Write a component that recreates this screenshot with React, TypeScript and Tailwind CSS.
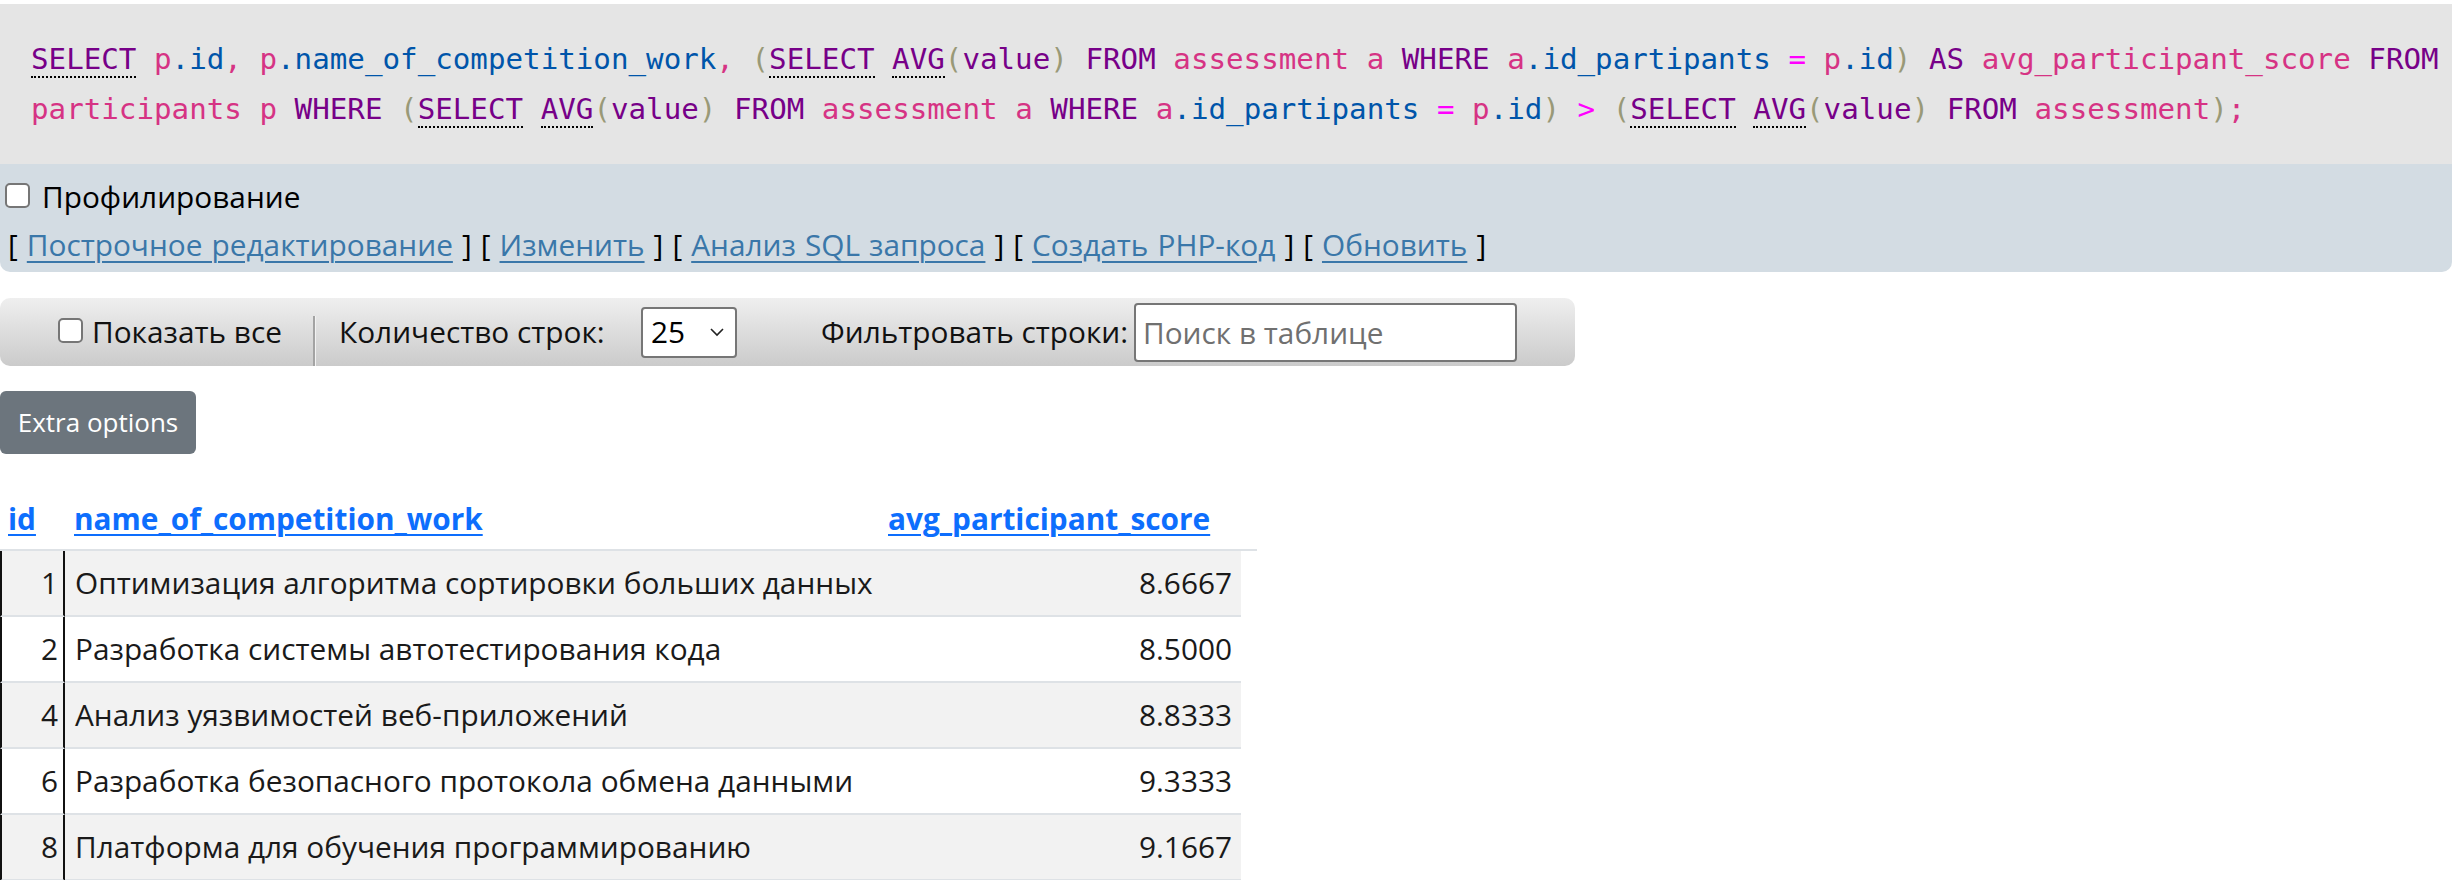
type Tok = [string, string];

const K = 'text-[#770088]';
const U = 'text-[#770088] border-b-2 border-dotted border-black';
const V = 'text-[#d63384]';
const C = 'text-[#0055aa]';
const B = 'text-[#999977]';
const O = 'text-[#ff00ff]';
const S = '';

const line1: Tok[] = [
  [U, 'SELECT'], [S, ' '], [V, 'p'], [C, '.id'], [V, ','], [S, ' '], [V, 'p'],
  [C, '.name_of_competition_work'], [V, ','], [S, ' '], [B, '('], [U, 'SELECT'], [S, ' '],
  [U, 'AVG'], [B, '('], [K, 'value'], [B, ')'], [S, ' '], [K, 'FROM'], [S, ' '],
  [V, 'assessment'], [S, ' '], [V, 'a'], [S, ' '], [K, 'WHERE'], [S, ' '], [V, 'a'],
  [C, '.id_partipants'], [S, ' '], [O, '='], [S, ' '], [V, 'p'], [C, '.id'], [B, ')'],
  [S, ' '], [K, 'AS'], [S, ' '], [V, 'avg_participant_score'], [S, ' '], [K, 'FROM'],
];

const line2: Tok[] = [
  [V, 'participants'], [S, ' '], [V, 'p'], [S, ' '], [K, 'WHERE'], [S, ' '], [B, '('],
  [U, 'SELECT'], [S, ' '], [U, 'AVG'], [B, '('], [K, 'value'], [B, ')'], [S, ' '],
  [K, 'FROM'], [S, ' '], [V, 'assessment'], [S, ' '], [V, 'a'], [S, ' '], [K, 'WHERE'],
  [S, ' '], [V, 'a'], [C, '.id_partipants'], [S, ' '], [O, '='], [S, ' '], [V, 'p'],
  [C, '.id'], [B, ')'], [S, ' '], [O, '>'], [S, ' '], [B, '('], [U, 'SELECT'], [S, ' '],
  [U, 'AVG'], [B, '('], [K, 'value'], [B, ')'], [S, ' '], [K, 'FROM'], [S, ' '],
  [V, 'assessment'], [B, ')'], [V, ';'],
];

const rows = [
  { id: 1, name: 'Оптимизация алгоритма сортировки больших данных', score: '8.6667' },
  { id: 2, name: 'Разработка системы автотестирования кода', score: '8.5000' },
  { id: 4, name: 'Анализ уязвимостей веб-приложений', score: '8.8333' },
  { id: 6, name: 'Разработка безопасного протокола обмена данными', score: '9.3333' },
  { id: 8, name: 'Платформа для обучения программированию', score: '9.1667' },
];

const links = [
  'Построчное редактирование',
  'Изменить',
  'Анализ SQL запроса',
  'Создать PHP-код',
  'Обновить',
];

function CodeLine({ tokens }: { tokens: Tok[] }) {
  return (
    <div className="whitespace-pre">
      {tokens.map(([cls, text], i) => (
        <span key={i} className={cls}>
          {text}
        </span>
      ))}
    </div>
  );
}

function Box() {
  return (
    <span className="inline-block h-[25px] w-[25px] shrink-0 rounded-[5px] border-2 border-[#767676] bg-white" />
  );
}

export default function App() {
  return (
    <div className="min-h-[880px] bg-white pt-[4px] font-['Open_Sans',sans-serif] text-[29.8px] text-[#111]">
      <div className="bg-[#e5e5e5] py-[30px] pl-[31px] font-['DejaVu_Sans_Mono',monospace] text-[29.2px] leading-[50px]">
        <CodeLine tokens={line1} />
        <CodeLine tokens={line2} />
      </div>

      <div className="rounded-b-[10px] bg-[#d3dce3] pb-[6px] pt-[12px]">
        <div className="flex h-[42px] items-center">
          <span className="ml-[5px]">
            <Box />
          </span>
          <span className="ml-[12px] text-black">Профилирование</span>
        </div>
        <div className="mt-[6px] flex h-[42px] items-center whitespace-pre pl-[8px] text-black [word-spacing:1.3px]">
          {links.map((l, i) => (
            <span key={l}>
              {i > 0 ? ' ' : ''}[{' '}
              <a href="#" className="text-[#3a77a9] underline decoration-2 underline-offset-[5px]">
                {l}
              </a>{' '}
              ]
            </span>
          ))}
        </div>
      </div>

      <div className="mt-[26px] flex h-[68px] w-[1575px] items-center rounded-[10px] bg-gradient-to-b from-[#efefef] to-[#cbcbcb]">
        <span className="ml-[58px]">
          <Box />
        </span>
        <span className="ml-[9px] w-[190px] whitespace-nowrap">Показать все</span>
        <span className="ml-[31px] flex h-[50px] self-end">
          <span className="w-[2px] bg-[#a3a3a3]" />
          <span className="w-[1px] bg-[#f2f2f2]" />
        </span>
        <span className="ml-[23px] w-[269px] whitespace-nowrap">Количество строк:</span>
        <div className="ml-[33px] flex h-[51px] w-[96px] items-center justify-between rounded-[4px] border-2 border-[#767676] bg-white pl-[8px] pr-[10px] text-black">
          <span>25</span>
          <svg width="16" height="10" viewBox="0 0 16 10" fill="none">
            <path d="M2 2l6 6 6-6" stroke="#222" strokeWidth="1.6" />
          </svg>
        </div>
        <span className="ml-[84px] w-[305px] whitespace-nowrap">Фильтровать строки:</span>
        <input
          className="ml-[8px] h-[59px] w-[383px] rounded-[4px] border-2 border-[#767676] bg-white px-[7px] text-[29.8px] placeholder:text-[#707070]"
          placeholder="Поиск в таблице"
        />
      </div>

      <button className="mt-[25px] flex h-[63px] w-[196px] items-center justify-center rounded-[6px] bg-[#6c757d] text-[26px] text-white">
        Extra options
      </button>

      <table className="mt-[35px] border-separate border-spacing-0">
        <thead>
          <tr className="leading-[60px]">
            <th className="w-[65px] border-b-2 border-[#dee2e6] pl-[8px] text-left font-bold">
              <a href="#" className="text-[#0d6efd] underline decoration-2 underline-offset-[4px]">
                id
              </a>
            </th>
            <th className="w-[816px] border-b-2 border-[#dee2e6] pl-[9px] text-left font-bold">
              <a href="#" className="text-[#0d6efd] underline decoration-2 underline-offset-[4px]">
                name_of_competition_work
              </a>
            </th>
            <th className="w-[360px] border-b-2 border-[#dee2e6] pl-[7px] text-left font-bold">
              <a href="#" className="text-[#0d6efd] underline decoration-2 underline-offset-[4px]">
                avg_participant_score
              </a>
            </th>
            <th className="w-[16px] border-b-2 border-[#dee2e6]" />
          </tr>
        </thead>
        <tbody>
          {rows.map((r, i) => {
            const bg = i % 2 === 0 ? 'bg-[#f2f2f2]' : 'bg-white';
            return (
              <tr key={r.id} className="leading-[64px] text-[#1a1a1a]">
                <td className={`border-x-2 border-b-2 border-x-[#111] border-b-[#dee2e6] pr-[5px] text-right ${bg}`}>
                  {r.id}
                </td>
                <td className={`whitespace-nowrap border-b-2 border-[#dee2e6] pl-[10px] ${bg}`}>{r.name}</td>
                <td className={`border-b-2 border-[#dee2e6] pr-[9px] text-right ${bg}`}>{r.score}</td>
                <td />
              </tr>
            );
          })}
        </tbody>
      </table>
    </div>
  );
}
